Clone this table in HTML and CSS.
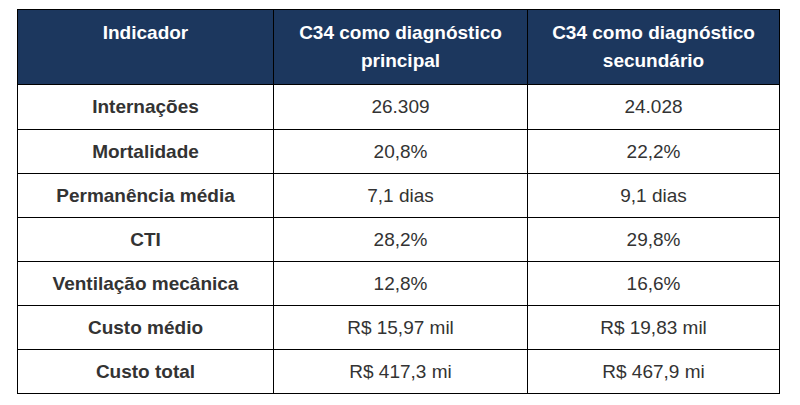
FILE: index.html
```html
<!DOCTYPE html>
<html lang="pt-BR">
<head>
<meta charset="utf-8">
<title>C34</title>
<link rel="stylesheet" href="styles.css">
</head>
<body>
<div class="page">
<table class="data">
  <colgroup>
    <col class="c1"><col class="c2"><col class="c3">
  </colgroup>
  <thead>
    <tr>
      <th>Indicador</th>
      <th>C34 como diagnóstico principal</th>
      <th>C34 como diagnóstico secundário</th>
    </tr>
  </thead>
  <tbody>
    <tr class="first"><td class="lbl">Internações</td><td>26.309</td><td>24.028</td></tr>
    <tr><td class="lbl">Mortalidade</td><td>20,8%</td><td>22,2%</td></tr>
    <tr><td class="lbl">Permanência média</td><td>7,1 dias</td><td>9,1 dias</td></tr>
    <tr><td class="lbl">CTI</td><td>28,2%</td><td>29,8%</td></tr>
    <tr><td class="lbl">Ventilação mecânica</td><td>12,8%</td><td>16,6%</td></tr>
    <tr><td class="lbl">Custo médio</td><td>R$ 15,97 mil</td><td>R$ 19,83 mil</td></tr>
    <tr><td class="lbl">Custo total</td><td>R$ 417,3 mi</td><td>R$ 467,9 mi</td></tr>
  </tbody>
</table>
</div>
</body>
</html>
```
FILE: styles.css
```css
html, body {
  margin: 0;
  padding: 0;
  background: #ffffff;
}
.page {
  padding: 9px 0 0 17px;
  font-family: "Liberation Sans", Arial, sans-serif;
}
.data {
  border-collapse: collapse;
  table-layout: fixed;
  width: 762px;
  font-size: 19px;
  line-height: 28px;
  color: #333333;
}
.c1 { width: 256px; }
.c2 { width: 254px; }
.c3 { width: 252px; }
.data th {
  background: #1c375e;
  color: #ffffff;
  font-weight: bold;
  vertical-align: top;
  text-align: center;
  padding: 9px 20px 9px 20px;
  border: 1px solid #000000;
}
.data td {
  text-align: center;
  vertical-align: middle;
  padding: 8px 10px 7px 10px;
  border: 1px solid #000000;
}
.data tr.first td {
  padding-bottom: 8px;
}
.data td.lbl {
  font-weight: bold;
}
```
